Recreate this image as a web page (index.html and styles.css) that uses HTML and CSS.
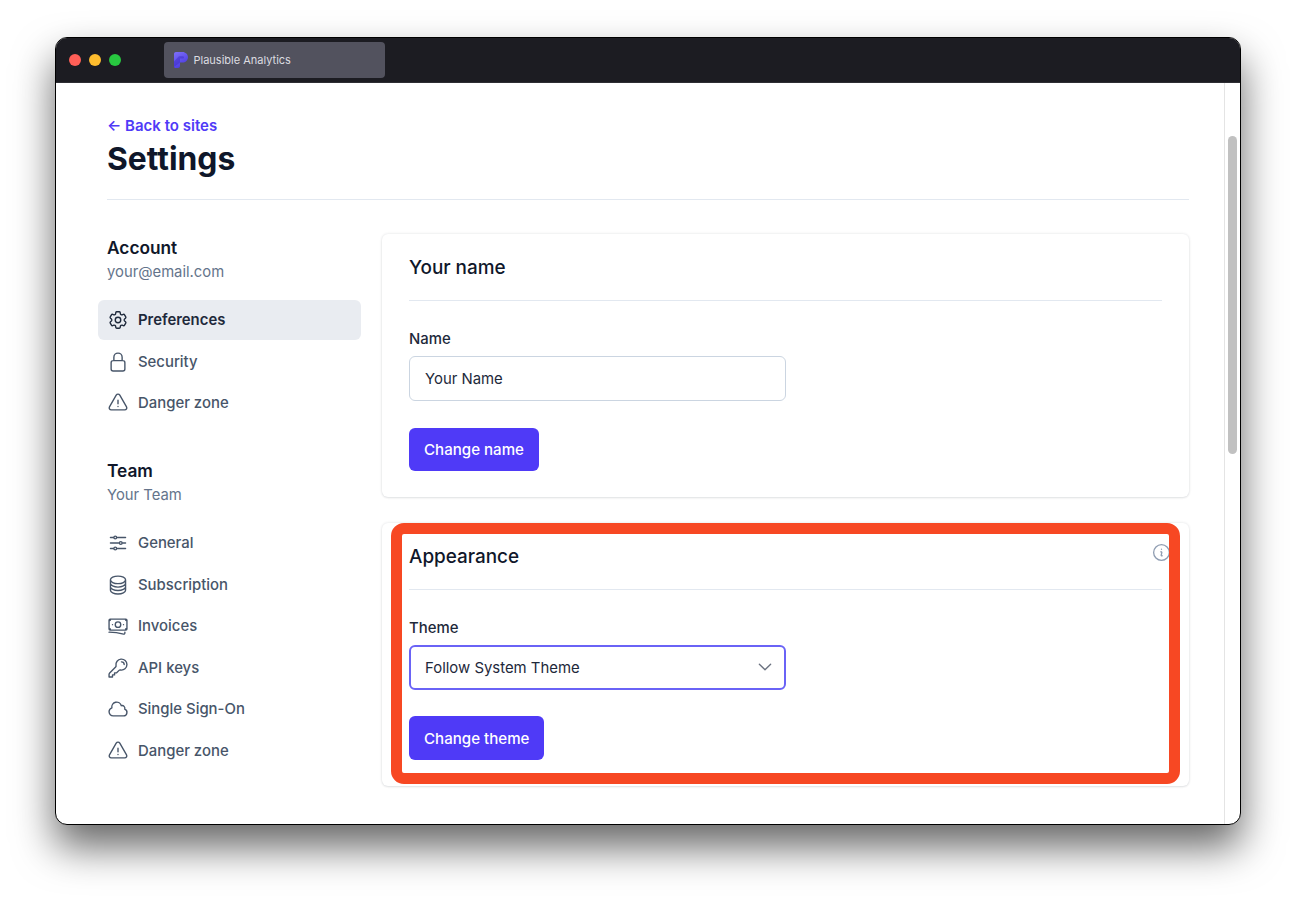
FILE: index.html
```html
<!DOCTYPE html>
<html lang="en">
<head>
<meta charset="utf-8">
<title>Plausible Analytics</title>
<link rel="stylesheet" href="styles.css">
</head>
<body>
<div class="stage">
  <div class="window">
    <header class="chrome">
      <div class="lights">
        <span class="light red"></span><span class="light yellow"></span><span class="light green"></span>
      </div>
      <div class="tab">
        <svg class="favicon" viewBox="0 0 14 16">
          <defs><linearGradient id="fav" x1="0" y1="0" x2="0.5" y2="1"><stop offset="0" stop-color="#7f70fa"/><stop offset="1" stop-color="#4a3ae0"/></linearGradient></defs>
          <path fill="url(#fav)" d="M0 2C0 .9.9 0 2 0h6.500C11.500 0 14 2.300 14 5.300s-2.500 5.300-5.500 5.300H6v3.400c0 1.100-.9 2-2 2H1.500C.7 16 0 15.300 0 14.500Z"/>
          <path fill="#3f30c8" opacity=".55" d="M0 9.500 5 4.300h3.600c.8 0 1.400.5 1.400 1.100s-.6 1.200-1.400 1.200H6V10.600L0 15Z"/>
        </svg>
        <span class="tab-title">Plausible Analytics</span>
      </div>
    </header>
    <div class="viewport">
      <main class="page">
        <a class="back" href="#">← Back to sites</a>
        <h1 class="title">Settings</h1>
        <div class="rule"></div>
        <div class="columns">
          <nav class="side">
            <section class="side-group">
              <h2 class="side-head">Account</h2>
              <p class="side-sub">your@email.com</p>
              <ul class="menu">
                <li class="item active"><svg class="ico" viewBox="0 0 24 24"><path d="M9.594 3.94c.09-.542.56-.94 1.11-.94h2.593c.55 0 1.02.398 1.11.94l.213 1.281c.063.374.313.686.645.87.074.04.147.083.22.127.325.196.72.257 1.075.124l1.217-.456a1.125 1.125 0 0 1 1.37.49l1.296 2.247a1.125 1.125 0 0 1-.26 1.431l-1.003.827c-.293.241-.438.613-.43.992a7.723 7.723 0 0 1 0 .255c-.008.378.137.75.43.991l1.004.827c.424.35.534.955.26 1.43l-1.298 2.247a1.125 1.125 0 0 1-1.369.491l-1.217-.456c-.355-.133-.75-.072-1.076.124a6.47 6.47 0 0 1-.22.128c-.331.183-.581.495-.644.869l-.213 1.281c-.09.543-.56.94-1.11.94h-2.594c-.55 0-1.019-.398-1.11-.94l-.213-1.281c-.062-.374-.312-.686-.644-.87a6.52 6.52 0 0 1-.22-.127c-.325-.196-.72-.257-1.076-.124l-1.217.456a1.125 1.125 0 0 1-1.369-.49l-1.297-2.247a1.125 1.125 0 0 1 .26-1.431l1.004-.827c.292-.24.437-.613.43-.991a6.932 6.932 0 0 1 0-.255c.007-.38-.138-.751-.43-.992l-1.004-.827a1.125 1.125 0 0 1-.26-1.43l1.297-2.247a1.125 1.125 0 0 1 1.37-.491l1.216.456c.356.133.751.072 1.076-.124.072-.044.146-.086.22-.128.332-.183.582-.495.644-.869l.214-1.28Z"/><path d="M15 12a3 3 0 1 1-6 0 3 3 0 0 1 6 0Z"/></svg>Preferences</li>
                <li class="item"><svg class="ico" viewBox="0 0 24 24"><path d="M16.5 10.5V6.750a4.500 4.500 0 1 0-9 0v3.750m-.75 11.250h10.500a2.250 2.250 0 0 0 2.250-2.250v-6.750a2.250 2.250 0 0 0-2.250-2.250H6.750a2.250 2.250 0 0 0-2.250 2.250v6.750a2.250 2.250 0 0 0 2.250 2.250Z"/></svg>Security</li>
                <li class="item"><svg class="ico" viewBox="0 0 24 24"><path d="M12 9v3.750m-9.303 3.376c-.866 1.500.217 3.374 1.948 3.374h14.710c1.730 0 2.813-1.874 1.948-3.374L13.949 3.378c-.866-1.500-3.032-1.500-3.898 0L2.697 16.126ZM12 15.750h.007v.008H12v-.008Z"/></svg>Danger zone</li>
              </ul>
            </section>
            <section class="side-group">
              <h2 class="side-head">Team</h2>
              <p class="side-sub">Your Team</p>
              <ul class="menu">
                <li class="item"><svg class="ico" viewBox="0 0 24 24"><path d="M10.5 6h9.750M10.500 6a1.500 1.500 0 1 1-3 0m3 0a1.500 1.500 0 1 0-3 0M3.750 6H7.500m3 12h9.750m-9.750 0a1.500 1.500 0 0 1-3 0m3 0a1.500 1.500 0 0 0-3 0m-3.750 0H7.500m9-6h3.750m-3.750 0a1.500 1.500 0 0 1-3 0m3 0a1.500 1.500 0 0 0-3 0m-9.750 0h9.750"/></svg>General</li>
                <li class="item"><svg class="ico" viewBox="0 0 24 24"><path d="M20.250 6.375c0 2.278-3.694 4.125-8.250 4.125S3.750 8.653 3.750 6.375m16.500 0c0-2.278-3.694-4.125-8.250-4.125S3.750 4.097 3.750 6.375m16.500 0v11.250c0 2.278-3.694 4.125-8.250 4.125s-8.250-1.847-8.250-4.125V6.375m16.500 0v3.750m-16.500-3.750v3.750m16.500 0v3.750C20.250 16.153 16.556 18 12 18s-8.250-1.847-8.250-4.125v-3.750m16.500 0c0 2.278-3.694 4.125-8.250 4.125s-8.250-1.847-8.250-4.125"/></svg>Subscription</li>
                <li class="item"><svg class="ico" viewBox="0 0 24 24"><path d="M2.250 18.750a60.070 60.070 0 0 1 15.797 2.101c.727.198 1.453-.342 1.453-1.096V18.750M3.750 4.500v.750A.750.750 0 0 1 3 6h-.750m0 0v-.375c0-.621.504-1.125 1.125-1.125H20.250M2.250 6v9m18-10.500v.750c0 .414.336.750.750.750h.750m-1.500-1.500h.375c.621 0 1.125.504 1.125 1.125v9.750c0 .621-.504 1.125-1.125 1.125h-.375m1.500-1.500H21a.750.750 0 0 0-.750.750v.750m0 0H3.750m0 0h-.375a1.125 1.125 0 0 1-1.125-1.125V15m1.500 1.500v-.750A.750.750 0 0 0 3 15h-.750M15 10.500a3 3 0 1 1-6 0 3 3 0 0 1 6 0Zm3 0h.008v.008H18V10.500Zm-12 0h.008v.008H6V10.500Z"/></svg>Invoices</li>
                <li class="item"><svg class="ico" viewBox="0 0 24 24"><path d="M15.750 5.250a3 3 0 0 1 3 3m3 0a6 6 0 0 1-7.029 5.912c-.563-.097-1.159.026-1.563.430L10.500 17.250H8.250v2.250H6v2.250H2.250v-2.818c0-.597.237-1.170.659-1.591l6.499-6.499c.404-.404.527-1 .430-1.563A6 6 0 1 1 21.750 8.250Z"/></svg>API keys</li>
                <li class="item"><svg class="ico" viewBox="0 0 24 24"><path d="M2.250 15a4.500 4.500 0 0 0 4.500 4.500H18a3.750 3.750 0 0 0 1.332-7.257 3 3 0 0 0-3.758-3.848 5.250 5.250 0 0 0-10.233 2.330A4.500 4.500 0 0 0 2.250 15Z"/></svg>Single Sign-On</li>
                <li class="item"><svg class="ico" viewBox="0 0 24 24"><path d="M12 9v3.750m-9.303 3.376c-.866 1.500.217 3.374 1.948 3.374h14.710c1.730 0 2.813-1.874 1.948-3.374L13.949 3.378c-.866-1.500-3.032-1.500-3.898 0L2.697 16.126ZM12 15.750h.007v.008H12v-.008Z"/></svg>Danger zone</li>
              </ul>
            </section>
          </nav>
          <div class="cards">
            <section class="card">
              <h3 class="card-title">Your name</h3>
              <div class="card-rule"></div>
              <label class="label">Name</label>
              <input class="field" type="text" value="Your Name">
              <button class="btn" type="button">Change name</button>
            </section>
            <section class="card">
              <h3 class="card-title">Appearance</h3>
              <div class="card-rule"></div>
              <label class="label">Theme</label>
              <div class="field focus">Follow System Theme
                <svg class="chev" viewBox="0 0 24 24"><path d="m19.500 8.250-7.500 7.500-7.500-7.500"/></svg>
              </div>
              <button class="btn" type="button">Change theme</button>
              <svg class="info" viewBox="0 0 24 24"><path d="m11.250 11.250.041-.020a.750.750 0 0 1 1.063.852l-.708 2.836a.750.750 0 0 0 1.063.853l.041-.021M21 12a9 9 0 1 1-18 0 9 9 0 0 1 18 0Zm-9-3.750h.008v.008H12V8.250Z"/></svg>
              <div class="highlight"></div>
            </section>
          </div>
        </div>
      </main>
      <aside class="gutter"><div class="thumb"></div></aside>
    </div>
  </div>
</div>
</body>
</html>
```

FILE: styles.css
```css
* { box-sizing: border-box; }
html, body { margin: 0; height: 100%; overflow: hidden; background: #fff; }
body { font-family: Inter, "Liberation Sans", sans-serif; color: #0f172a; }
h1, h2, h3, p, ul { margin: 0; padding: 0; }
ul { list-style: none; }

.stage { height: 898px; padding: 37px 55px 73px; }
.window {
  height: 788px;
  display: flex;
  flex-direction: column;
  border: 1px solid #000;
  border-radius: 12px;
  overflow: hidden;
  background: #fff;
  box-shadow: 0 22px 40px rgba(0, 0, 0, .6);
}
.chrome {
  height: 45px;
  flex: none;
  display: flex;
  align-items: center;
  background: #1c1c22;
  border-bottom: 1px solid #2e2e34;
}
.lights { display: flex; gap: 8px; padding-left: 13px; width: 108px; }
.light { width: 12px; height: 12px; border-radius: 50%; }
.red { background: #ff5f57; }
.yellow { background: #febc2e; }
.green { background: #28c840; }
.tab {
  width: 221px;
  height: 36px;
  display: flex;
  align-items: center;
  gap: 6px;
  padding-left: 9.500px;
  background: #52525e;
  border-radius: 4px;
}
.favicon { width: 14px; height: 16px; }
.tab-title { font-size: 11px; color: #dcdce0; }

.viewport { flex: 1; display: flex; min-height: 0; }
.page { flex: 1; padding: 34px 35px 0 51px; }
.gutter { width: 16px; flex: none; border-left: 1px solid #e4e4e4; padding: 53px 3px 0 3px; }
.thumb { height: 318px; background: #c1c1c1; border-radius: 5px; }

.back { display: block; font-size: 15px; line-height: 18px; font-weight: 600; color: #4f3af7; text-decoration: none; }
.title { font-size: 31.800px; line-height: 40px; font-weight: 700; color: #0f172a; margin-top: 4px; }
.rule { height: 1px; background: #e2e8f0; margin-top: 20px; }

.columns { display: flex; margin-top: 34px; }
.side { width: 284px; flex: none; display: flex; flex-direction: column; gap: 34px; margin-left: -9px; }
.side-head { font-size: 17.300px; line-height: 24px; font-weight: 600; color: #0f172a; margin-left: 9px; margin-top: 2px; }
.side-sub { font-size: 14.800px; line-height: 22px; color: #64748b; margin: 1px 0 0 9px; }
.menu { display: flex; flex-direction: column; gap: 1.500px; margin-top: 17px; }
.item {
  width: 263px;
  height: 40px;
  display: flex;
  align-items: center;
  gap: 9px;
  padding-left: 9px;
  border-radius: 6px;
  font-size: 14.900px;
  font-weight: 500;
  color: #475569;
}
.item.active { background: #e9ecf1; color: #1e293b; font-weight: 600; }
.ico { width: 22px; height: 22px; fill: none; stroke: currentColor; stroke-width: 1.500; stroke-linecap: round; stroke-linejoin: round; }

.cards { flex: 1; display: flex; flex-direction: column; gap: 26px; }
.card {
  position: relative;
  height: 263px;
  padding: 0 27px;
  background: #fff;
  border-radius: 6px;
  box-shadow: 0 0 3px rgba(15, 23, 42, .12), 0 1px 2px rgba(15, 23, 42, .08);
}
.card-title { font-size: 18.900px; line-height: 28px; font-weight: 450; color: #0f172a; padding-top: 20px; box-sizing: content-box; height: 28px; }
.card-rule { height: 1px; background: #e2e8f0; margin-top: 18px; }
.label { display: block; font-size: 14.900px; line-height: 22px; font-weight: 500; color: #1e293b; margin-top: 27px; }
.field {
  position: relative;
  display: flex;
  align-items: center;
  width: 377px;
  height: 45px;
  margin-top: 6px;
  padding: 0 15px;
  border: 1px solid #cbd5e1;
  border-radius: 6px;
  background: #fff;
  font-family: inherit;
  font-size: 14.900px;
  color: #1e293b;
  outline: none;
}
.field.focus { border: 2px solid #6a63f6; padding: 1px 14px 0; margin-top: 5.600px; height: 45.500px; }
.chev { position: absolute; right: 10px; top: 50%; width: 18px; height: 18px; margin-top: -9px; fill: none; stroke: #6b7280; stroke-width: 1.800; stroke-linecap: round; stroke-linejoin: round; }
.btn {
  display: block;
  height: 43.500px;
  margin-top: 26.500px;
  padding: 1px 15px 0;
  border: 0;
  border-radius: 6px;
  background: #4f3af7;
  color: #fff;
  font-family: inherit;
  font-size: 15.100px;
  font-weight: 500;
}
.field.focus + .btn { margin-top: 26px; }
.info { position: absolute; top: 18.500px; right: 17.500px; width: 21px; height: 21px; fill: none; stroke: #8f9db2; stroke-width: 1.500; stroke-linecap: round; stroke-linejoin: round; }
.highlight { position: absolute; top: 0; left: 9px; right: 9px; height: 261px; border: 11px solid #f74823; border-radius: 13px; }
```
